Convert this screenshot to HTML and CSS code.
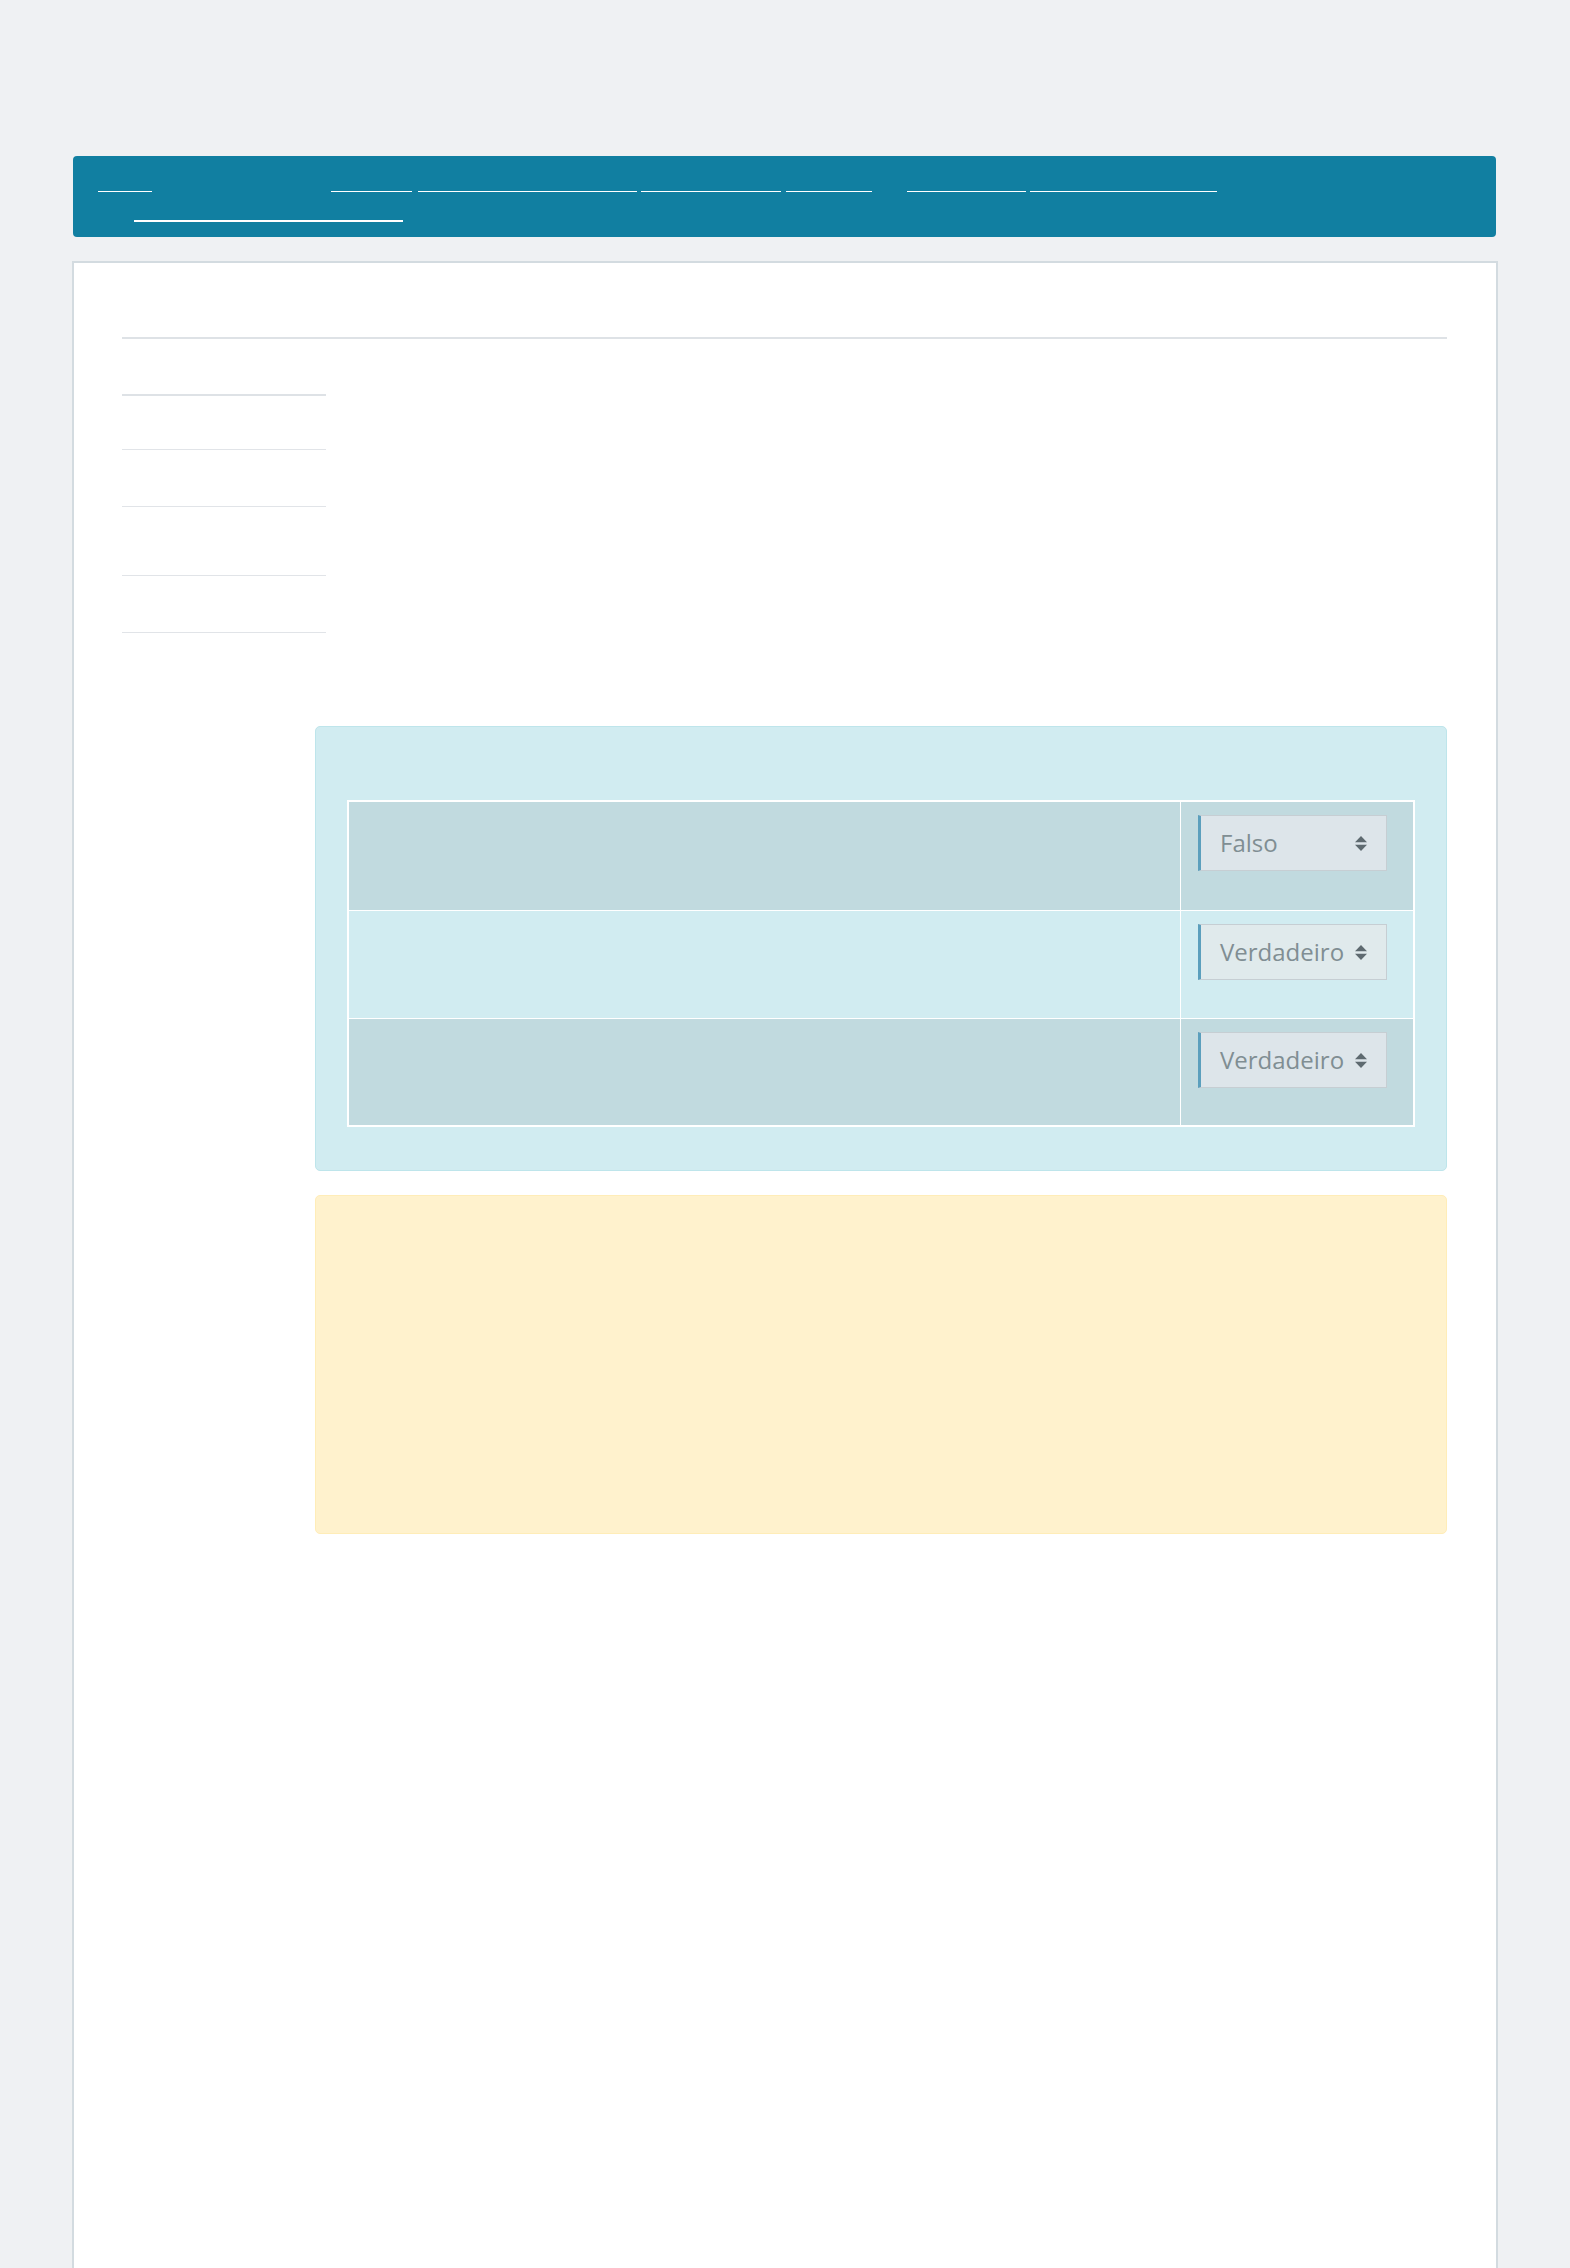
FILE: index.html
```html
<!DOCTYPE html>
<html lang="pt">
<head>
<meta charset="utf-8">
<title>Revisão da tentativa</title>
<link rel="stylesheet" href="styles.css">
</head>
<body>
<div class="page">
  <nav class="navbar">
    <ol class="crumbs">
      <li class="crumb c1"></li>
      <li class="crumb c2"></li>
      <li class="crumb c3"></li>
      <li class="crumb c4"></li>
      <li class="crumb c5"></li>
      <li class="crumb c6"></li>
      <li class="crumb c7"></li>
    </ol>
    <div class="crumbs-row2"><span class="crumb c8"></span></div>
  </nav>

  <main class="card">
    <div class="page-header"></div>

    <div class="summary">
      <div class="summary-row first"></div>
      <div class="summary-row"></div>
      <div class="summary-row tall"></div>
      <div class="summary-row"></div>
      <div class="summary-row"></div>
    </div>

    <section class="question">
      <div class="q-info"></div>
      <div class="q-content">
        <div class="formulation">
          <table class="answer-table">
            <tr class="odd">
              <td class="stem"></td>
              <td class="control">
                <div class="select"><span>Falso</span>
                  <svg width="12" height="15" viewBox="0 0 12 15"><path d="M0 6.2 L6 0 L12 6.2 Z M0 8.8 L12 8.8 L6 15 Z" fill="#5e6a70"/></svg>
                </div>
              </td>
            </tr>
            <tr class="even">
              <td class="stem"></td>
              <td class="control">
                <div class="select"><span>Verdadeiro</span>
                  <svg width="12" height="15" viewBox="0 0 12 15"><path d="M0 6.2 L6 0 L12 6.2 Z M0 8.8 L12 8.8 L6 15 Z" fill="#5e6a70"/></svg>
                </div>
              </td>
            </tr>
            <tr class="odd">
              <td class="stem"></td>
              <td class="control">
                <div class="select"><span>Verdadeiro</span>
                  <svg width="12" height="15" viewBox="0 0 12 15"><path d="M0 6.2 L6 0 L12 6.2 Z M0 8.8 L12 8.8 L6 15 Z" fill="#5e6a70"/></svg>
                </div>
              </td>
            </tr>
          </table>
        </div>
        <div class="outcome"></div>
      </div>
    </section>
  </main>
</div>
</body>
</html>
```
FILE: styles.css
```css
html, body {
  margin: 0;
  padding: 0;
}
body {
  background: #eff1f3;
  font-family: "Open Sans", "Liberation Sans", sans-serif;
  font-size: 22.5px;
  color: #373a3c;
}
.page {
  padding-top: 156px;
  margin-left: 72px;
  width: 1426px;
}

/* navbar / breadcrumb */
.navbar {
  margin: 0 2px 0 1px;
  height: 81px;
  box-sizing: border-box;
  background: #117fa1;
  border-radius: 4px;
  padding: 35px 0 0 25px;
}
.crumbs {
  list-style: none;
  margin: 0;
  padding: 0;
  display: flex;
  height: 1px;
}
.crumb {
  display: block;
  height: 1px;
  background: #ffffff;
}
.c1 { width: 54px; }
.c2 { width: 81px; margin-left: 179px; }
.c3 { width: 219px; margin-left: 6px; }
.c4 { width: 140px; margin-left: 4px; }
.c5 { width: 86px; margin-left: 5px; }
.c6 { width: 119px; margin-left: 35px; }
.c7 { width: 187px; margin-left: 4px; }
.crumbs-row2 {
  margin: 28px 0 0 36px;
  display: flex;
}
.c8 { width: 269px; height: 2px; }

/* main card */
.card {
  display: block;
  margin-top: 24px;
  background: #ffffff;
  border: 2px solid #d3dbe0;
  min-height: 2100px;
  padding: 0 49px 0 48px;
}
.page-header {
  height: 74px;
  border-bottom: 2px solid #dee2e6;
}

.summary {
  margin-top: 55px;
  width: 204px;
  margin-bottom: 37px;
}
.summary-row {
  height: 56px;
  border-top: 1px solid #e1e4e8;
}
.summary-row.first {
  height: 53px;
  border-top: 2px solid #dee2e6;
}
.summary-row.tall {
  height: 68px;
}

/* question */
.question {
  display: flex;
}
.q-info {
  width: 193px;
  flex: none;
}
.q-content {
  flex: 1;
}
.formulation {
  background: #d1ecf1;
  border: 1px solid #bee5eb;
  border-radius: 5px;
  padding: 73px 31px 43px 31px;
}
.answer-table {
  width: 100%;
  border-collapse: collapse;
  border: 2px solid #ffffff;
}
.answer-table td {
  border: 1px solid #ffffff;
  padding: 0;
  vertical-align: top;
}
.answer-table tr { height: 108px; }
.answer-table tr:first-child { height: 109px; }
.answer-table tr.odd {
  background: #c1dadf;
}
.stem {
  width: 831px;
}
.control {
  padding: 13px 0 0 17px !important;
}
.select {
  box-sizing: border-box;
  width: 189px;
  height: 56px;
  display: flex;
  align-items: center;
  justify-content: space-between;
  padding: 0 19px 0 19px;
  border: 1px solid #c6ced3;
  border-left: 3px solid #5b9fbd;
  background: #dde5ea;
  color: #808e93;
  font-size: 24px;
  line-height: 1;
}
.even .select {
  background: #e0eaec;
}
.select svg {
  flex: none;
  margin-top: 1px;
}

.outcome {
  margin-top: 24px;
  height: 339px;
  box-sizing: border-box;
  background: #fff2cd;
  border: 1px solid #ffedb8;
  border-radius: 5px;
}
```
